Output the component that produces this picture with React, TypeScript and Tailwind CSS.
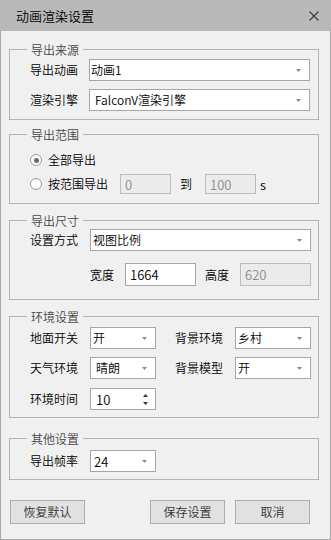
import type { ReactNode } from "react"
import clsx from "clsx"

const font = "font-['Noto_Sans_CJK_SC','Noto_Sans',sans-serif] font-[350]"

function Group({ title, className, children }: { title: string; className?: string; children: ReactNode }) {
  return (
    <div className={clsx("w-[310px] border border-[#b4b4b4]", className)}>
      <div className="-mt-[9px] ml-[17px] w-fit bg-[#f0f0f0] px-[4px] text-[12px] leading-[17px] text-[#474747]">
        {title}
      </div>
      {children}
    </div>
  )
}

function Arrow() {
  return (
    <svg width="5" height="3" viewBox="0 0 5 3" className="shrink-0">
      <path d="M0 0h5L2.5 3z" fill="#8a8a8a" />
    </svg>
  )
}

function Combo({ value, className, pad = "pl-[1px]" }: { value: string; className?: string; pad?: string }) {
  return (
    <div
      className={clsx(
        "flex h-[22px] items-center justify-between border border-[#a6a6a6] bg-white pr-[8px] text-[12px] leading-none text-black",
        pad,
        className
      )}
    >
      <span>{value}</span>
      <Arrow />
    </div>
  )
}

function TextBox({ value, disabled, className }: { value: string; disabled?: boolean; className?: string }) {
  return (
    <div
      className={clsx(
        "flex items-center border pl-[4px] text-[13px] leading-none",
        disabled ? "border-[#bcbcbc] bg-[#ebebeb] text-[#8a8a8a]" : "border-[#a6a6a6] bg-white text-black",
        className
      )}
    >
      {value}
    </div>
  )
}

function Label({ text, className }: { text: string; className?: string }) {
  return <span className={clsx("shrink-0 text-[12px] leading-none text-black", className)}>{text}</span>
}

function Radio({ checked }: { checked?: boolean }) {
  return (
    <span className="flex h-[12px] w-[12px] shrink-0 items-center justify-center rounded-full border border-[#9c9c9c] bg-white">
      {checked && <span className="h-[5px] w-[5px] rounded-full bg-[#6a6a6a]" />}
    </span>
  )
}

function Button({ text, className }: { text: string; className?: string }) {
  return (
    <button
      className={clsx(
        "flex h-[24px] w-[75px] items-center justify-center border border-[#adadad] bg-[#e1e1e1] text-[12px] leading-none text-[#333]",
        className
      )}
    >
      {text}
    </button>
  )
}

export default function App() {
  return (
    <div className={clsx("flex h-[540px] w-[331px] flex-col", font)}>
      {/* title bar */}
      <div className="flex h-[31px] shrink-0 items-center justify-between bg-[#b9b9b9] pl-[16px] pr-[12px]">
        <span className="text-[13px] leading-none text-black">动画渲染设置</span>
        <svg width="10" height="10" viewBox="0 0 10 10">
          <path d="M0.5 0.5L9.5 9.5M9.5 0.5L0.5 9.5" stroke="#3a3a3a" strokeWidth="1.1" />
        </svg>
      </div>

      <div className="flex flex-1 flex-col border-x border-b border-[#a8a8a8] bg-[#f0f0f0] pl-[8px]">
        <Group title="导出来源" className="mt-[18px] pb-[8px]">
          <div className="flex flex-col gap-[8px] pl-[20px] pt-[1px]">
            <div className="flex items-center">
              <Label text="导出动画" className="w-[59px]" />
              <Combo value="动画1" className="w-[221px] border-[#7a7a7a]" />
            </div>
            <div className="flex items-center">
              <Label text="渲染引擎" className="w-[59px]" />
              <Combo value="FalconV渲染引擎" pad="pl-[5px]" className="w-[221px]" />
            </div>
          </div>
        </Group>

        <Group title="导出范围" className="mt-[14px] pb-[9px]">
          <div className="flex flex-col gap-[4px] pl-[20px] pt-[7px]">
            <div className="flex h-[20px] items-center">
              <Radio checked />
              <Label text="全部导出" className="ml-[6px]" />
            </div>
            <div className="flex h-[20px] items-center">
              <Radio />
              <Label text="按范围导出" className="ml-[6px] w-[72px]" />
              <TextBox value="0" disabled className="h-[20px] w-[51px]" />
              <Label text="到" className="ml-[9px] w-[12px]" />
              <TextBox value="100" disabled className="ml-[13px] h-[20px] w-[51px]" />
              <Label text="s" className="ml-[4px] text-[13px]" />
            </div>
          </div>
        </Group>

        <Group title="导出尺寸" className="mt-[16px] pb-[13px]">
          <div className="flex flex-col gap-[12px] pl-[20px]">
            <div className="flex items-center">
              <Label text="设置方式" className="w-[60px]" />
              <Combo value="视图比例" pad="pl-[2px]" className="w-[221px]" />
            </div>
            <div className="flex items-center pl-[60px]">
              <Label text="宽度" className="w-[24px]" />
              <TextBox value="1664" className="ml-[11px] h-[23px] w-[71px]" />
              <Label text="高度" className="ml-[9px] w-[24px]" />
              <TextBox value="620" disabled className="ml-[11px] h-[23px] w-[71px]" />
            </div>
          </div>
        </Group>

        <Group title="环境设置" className="mt-[16px] pb-[7px]">
          <div className="flex flex-col pl-[20px] pt-[2px]">
            <div className="flex items-center">
              <Label text="地面开关" className="w-[60px]" />
              <Combo value="开" pad="pl-[2px]" className="w-[66px]" />
              <Label text="背景环境" className="ml-[19px] w-[60px]" />
              <Combo value="乡村" pad="pl-[2px]" className="w-[76px]" />
            </div>
            <div className="mt-[8px] flex items-center">
              <Label text="天气环境" className="w-[60px]" />
              <Combo value="晴朗" pad="pl-[5px]" className="w-[66px]" />
              <Label text="背景模型" className="ml-[19px] w-[60px]" />
              <Combo value="开" pad="pl-[2px]" className="w-[76px]" />
            </div>
            <div className="mt-[9px] flex items-center">
              <Label text="环境时间" className="w-[60px]" />
              <div className="flex h-[22px] w-[66px] items-center justify-between border border-[#a6a6a6] bg-white pl-[5px] pr-[7px] text-[13px] leading-none text-black">
                <span>10</span>
                <span className="flex flex-col gap-[5px]">
                  <svg width="5" height="3" viewBox="0 0 5 3">
                    <path d="M2.5 0L5 3H0z" fill="#333" />
                  </svg>
                  <svg width="5" height="3" viewBox="0 0 5 3">
                    <path d="M0 0h5L2.5 3z" fill="#333" />
                  </svg>
                </span>
              </div>
            </div>
          </div>
        </Group>

        <Group title="其他设置" className="mt-[20px] pb-[7px]">
          <div className="flex items-center pl-[20px] pt-[3px]">
            <Label text="导出帧率" className="w-[60px]" />
            <Combo value="24" pad="pl-[3px]" className="w-[66px] text-[13px]" />
          </div>
        </Group>

        <div className="mt-[20px] flex items-center pl-[1px]">
          <Button text="恢复默认" />
          <Button text="保存设置" className="ml-[65px]" />
          <Button text="取消" className="ml-[10px]" />
        </div>
      </div>
    </div>
  )
}
